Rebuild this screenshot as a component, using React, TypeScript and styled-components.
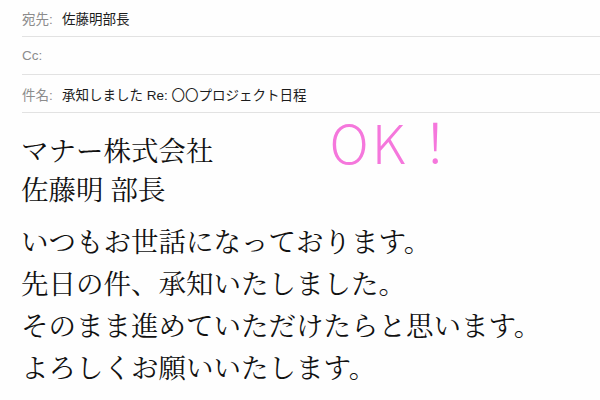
import React from 'react';
import styled, { createGlobalStyle } from 'styled-components';

const GlobalStyle = createGlobalStyle`
  html, body {
    margin: 0;
    padding: 0;
    background: #ffffff;
  }
`;

const StyledPage = styled.div`
  width: 600px;
  height: 400px;
  overflow: hidden;
  background: #fefefe;
`;

const StyledHeader = styled.div`
  display: flex;
  flex-direction: column;
  padding-left: 22px;
  margin-top: -1px;
`;

const StyledHeaderRow = styled.div`
  display: flex;
  align-items: center;
  height: 37px;
  border-bottom: 1px solid #e2e2e2;
  font-family: 'Liberation Sans', 'Noto Sans CJK JP', sans-serif;
  font-size: 13.5px;
`;

const StyledLabel = styled.span`
  color: #8c8c8c;
  width: 40px;
  flex-shrink: 0;
`;

const StyledValue = styled.span`
  color: #1c1c1c;
`;

const StyledBody = styled.div`
  display: flex;
  flex-direction: column;
  padding: 17px 0 0 21px;
  font-family: 'Noto Serif CJK JP', 'Noto Sans CJK JP', serif;
  color: #111111;
  font-size: 27.5px;
`;

const StyledAddress = styled.div`
  display: flex;
  flex-direction: column;
  line-height: 39px;
  margin-bottom: 11px;
`;

const StyledAddressLine = styled.div`
  display: flex;
  align-items: center;
  white-space: nowrap;
`;

const StyledStamp = styled.span`
  margin-left: 116px;
  margin-top: -18px;
  font-family: 'Noto Sans CJK JP', sans-serif;
  font-weight: 300;
  font-size: 54px;
  letter-spacing: 3px;
  line-height: 39px;
  color: #f577dc;
`;

const StyledMessage = styled.div`
  line-height: 42px;
  white-space: nowrap;
`;

const headerRows = [
  { label: '宛先:', value: '佐藤明部長' },
  { label: 'Cc:', value: '' },
  { label: '件名:', value: '承知しました Re: 〇〇プロジェクト日程' },
];

const messageLines = [
  'いつもお世話になっております。',
  '先日の件、承知いたしました。',
  'そのまま進めていただけたらと思います。',
  'よろしくお願いいたします。',
];

export default function App() {
  return (
    <StyledPage>
      <GlobalStyle />
      <StyledHeader>
        {headerRows.map((row) => (
          <StyledHeaderRow key={row.label}>
            <StyledLabel>{row.label}</StyledLabel>
            <StyledValue>{row.value}</StyledValue>
          </StyledHeaderRow>
        ))}
      </StyledHeader>

      <StyledBody>
        <StyledAddress>
          <StyledAddressLine>
            マナー株式会社
            <StyledStamp>OK！</StyledStamp>
          </StyledAddressLine>
          <StyledAddressLine>佐藤明 部長</StyledAddressLine>
        </StyledAddress>
        {messageLines.map((line) => (
          <StyledMessage key={line}>{line}</StyledMessage>
        ))}
      </StyledBody>
    </StyledPage>
  );
}
